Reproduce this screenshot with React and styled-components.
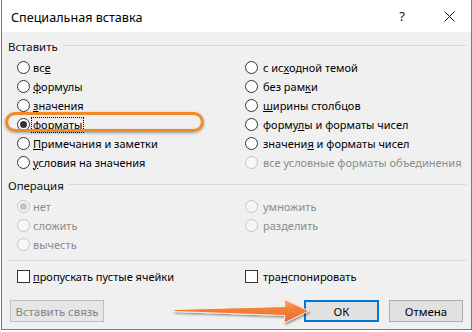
import React from "react";
import styled, { createGlobalStyle } from "styled-components";

const GlobalStyle = createGlobalStyle`
  html, body { margin: 0; padding: 0; background: #ffffff; }
  body { font-family: "Noto Sans", "Open Sans", sans-serif; color: #000; }
  * { box-sizing: border-box; }
`;

const Page = styled.div`
  width: 472px;
  height: 332px;
  padding-left: 1px;
  overflow: hidden;
`;

const Dialog = styled.div`
  position: relative;
  width: 471px;
  height: 330px;
  border: 1px solid #7a7a7a;
  border-top: none;
  background: #f0f0f0;
  display: flex;
  flex-direction: column;
`;

const TitleBar = styled.div`
  height: 32px;
  background: #ffffff;
  display: flex;
  align-items: center;
  padding-left: 9px;
  padding-right: 12px;
`;

const Title = styled.div`
  font-size: 12.6px;
  color: #000;
  padding-top: 3px;
`;

const Controls = styled.div`
  margin-left: auto;
  display: flex;
  align-items: center;
  gap: 27px;
`;

const TitleButton = styled.div`
  width: 20px;
  flex-shrink: 0;
  display: flex;
  justify-content: center;
  align-items: center;
  font-size: 13px;
  color: #111;
`;

const Body = styled.div`
  flex: 1;
  padding: 6px 5px 0 6px;
  display: flex;
  flex-direction: column;
  font-size: 11px;
`;

const GroupHeader = styled.div`
  height: 16px;
  display: flex;
  align-items: center;
  gap: 5px;
  margin-top: ${(p) => p.$mt || 0}px;
  margin-bottom: ${(p) => p.$mb || 0}px;
  color: #111;
  font-size: 11.4px;
  &::after {
    content: "";
    flex: 1;
    height: 1px;
    background: #d6d6d6;
    margin-top: -1px;
  }
`;

const Grid = styled.div`
  display: grid;
  grid-template-columns: 228px 1fr;
  grid-auto-flow: column;
  grid-template-rows: repeat(${(p) => p.$rows}, 19px);
  padding-left: 9px;
`;

const Row = styled.div`
  position: relative;
  display: flex;
  align-items: center;
  gap: ${(p) => (p.$right ? 5 : 3)}px;
  height: 19px;
  color: ${(p) => (p.$disabled ? "#8c8c8c" : "#000")};
  white-space: nowrap;
`;

const RadioCircle = styled.span`
  width: 13px;
  height: 13px;
  border-radius: 50%;
  border: 1px solid ${(p) => (p.$disabled ? "#c4c4c4" : "#333")};
  background: ${(p) => (p.$disabled ? "#f7f7f7" : "#fff")};
  display: flex;
  align-items: center;
  justify-content: center;
  flex-shrink: 0;
  &::after {
    content: "";
    display: ${(p) => (p.$checked ? "block" : "none")};
    width: 7px;
    height: 7px;
    border-radius: 50%;
    background: ${(p) => (p.$disabled ? "#c4c4c4" : "#333")};
  }
`;

const Box = styled.span`
  width: 13px;
  height: 13px;
  border: 1px solid #333;
  background: #fff;
  flex-shrink: 0;
`;

const Label = styled.span`
  padding: 0 1px;
  line-height: 14px;
  border: 1px dotted ${(p) => (p.$focus ? "#000" : "transparent")};
  margin-left: -2px;
`;

const Highlight = styled.div`
  position: absolute;
  left: -12px;
  top: -3px;
  width: 199px;
  height: 20px;
  border: 3px solid #f08a24;
  border-radius: 10px;
  box-shadow: 0 1px 3px rgba(0, 0, 0, 0.35), inset 0 0 1px rgba(160, 80, 0, 0.5);
  pointer-events: none;
`;

const Separator = styled.div`
  height: 1px;
  background: #d6d6d6;
  margin-top: ${(p) => p.$mt}px;
  margin-bottom: ${(p) => p.$mb}px;
`;

const Buttons = styled.div`
  display: flex;
  justify-content: space-between;
  align-items: center;
  margin-top: 14px;
  padding-left: 2px;
  padding-right: 3px;
`;

const ButtonGroup = styled.div`
  display: flex;
  gap: 10px;
`;

const Button = styled.div`
  width: ${(p) => p.$w}px;
  height: 22px;
  display: flex;
  align-items: center;
  justify-content: center;
  background: ${(p) => (p.$disabled ? "#e6e6e6" : "#e1e1e1")};
  border: ${(p) => (p.$primary ? "2px solid #0078d7" : p.$disabled ? "1px solid #bfbfbf" : "1px solid #adadad")};
  color: ${(p) => (p.$disabled ? "#838383" : "#000")};
  font-size: 11.4px;
`;

const ArrowSvg = styled.svg`
  position: absolute;
  left: 165px;
  top: 292px;
  pointer-events: none;
`;

const U = ({ children }) => <u>{children}</u>;

const pasteLeft = [
  { label: <>вс<U>е</U></> },
  { label: <><U>ф</U>ормулы</> },
  { label: <><U>з</U>начения</> },
  { label: <>форма<U>т</U>ы</>, checked: true, focus: true, highlight: true },
  { label: <><U>П</U>римечания и заметки</> },
  { label: <><U>у</U>словия на значения</> },
];

const pasteRight = [
  { label: <>с ис<U>х</U>одной темой</> },
  { label: <>без рам<U>к</U>и</> },
  { label: <><U>ш</U>ирины столбцов</> },
  { label: <>форму<U>л</U>ы и форматы чисел</> },
  { label: <>значени<U>я</U> и форматы чисел</> },
  { label: <>все условные форматы объединения</>, disabled: true },
];

const opLeft = [
  { label: "нет", checked: true, disabled: true },
  { label: "сложить", disabled: true },
  { label: "вычесть", disabled: true },
];

const opRight = [
  { label: "умножить", disabled: true },
  { label: "разделить", disabled: true },
];

function Radio({ item, right }) {
  return (
    <Row $disabled={item.disabled} $right={right}>
      {item.highlight && <Highlight />}
      <RadioCircle $checked={item.checked} $disabled={item.disabled} />
      <Label $focus={item.focus}>{item.label}</Label>
    </Row>
  );
}

export default function App() {
  return (
    <Page>
      <GlobalStyle />
      <Dialog>
        <TitleBar>
          <Title>Специальная вставка</Title>
          <Controls>
            <TitleButton>?</TitleButton>
            <TitleButton>
              <svg width="11" height="11" viewBox="0 0 11 11">
                <path d="M0.5 0.5 L10.5 10.5 M10.5 0.5 L0.5 10.5" stroke="#111" strokeWidth="1" />
              </svg>
            </TitleButton>
          </Controls>
        </TitleBar>
        <Body>
          <GroupHeader $mb={4}>Вставить</GroupHeader>
          <Grid $rows={6}>
            {pasteLeft.map((it, i) => (
              <Radio key={"l" + i} item={it} />
            ))}
            {pasteRight.map((it, i) => (
              <Radio key={"r" + i} item={it} right />
            ))}
          </Grid>
          <GroupHeader $mt={5} $mb={4}>Операция</GroupHeader>
          <Grid $rows={3}>
            {opLeft.map((it, i) => (
              <Radio key={"ol" + i} item={it} />
            ))}
            {opRight.map((it, i) => (
              <Radio key={"or" + i} item={it} right />
            ))}
          </Grid>
          <Separator $mt={6} $mb={6} />
          <Grid $rows={1}>
            <Row>
              <Box />
              <Label><U>п</U>ропускать пустые ячейки</Label>
            </Row>
            <Row $right>
              <Box />
              <Label>тра<U>н</U>спонировать</Label>
            </Row>
          </Grid>
          <Buttons>
            <Button $w={94} $disabled>Вставить связь</Button>
            <ButtonGroup>
              <Button $w={75} $primary>ОК</Button>
              <Button $w={74}>Отмена</Button>
            </ButtonGroup>
          </Buttons>
        </Body>
        <ArrowSvg width="150" height="40" viewBox="0 0 150 40">
          <defs>
            <linearGradient id="ag" x1="0" y1="0" x2="0" y2="1">
              <stop offset="0" stopColor="#ffb27a" />
              <stop offset="0.35" stopColor="#f7833c" />
              <stop offset="1" stopColor="#e8672a" />
            </linearGradient>
            <filter id="sh" x="-10%" y="-30%" width="120%" height="160%">
              <feDropShadow dx="1" dy="1.5" stdDeviation="1.2" floodColor="#000" floodOpacity="0.45" />
            </filter>
          </defs>
          <path
            d="M7 17.5 L118 14.5 L117 7 L142 19 L117 31 L118 23.5 L7 19.5 Z"
            fill="url(#ag)"
            stroke="#fff"
            strokeWidth="0.8"
            filter="url(#sh)"
          />
        </ArrowSvg>
      </Dialog>
    </Page>
  );
}
